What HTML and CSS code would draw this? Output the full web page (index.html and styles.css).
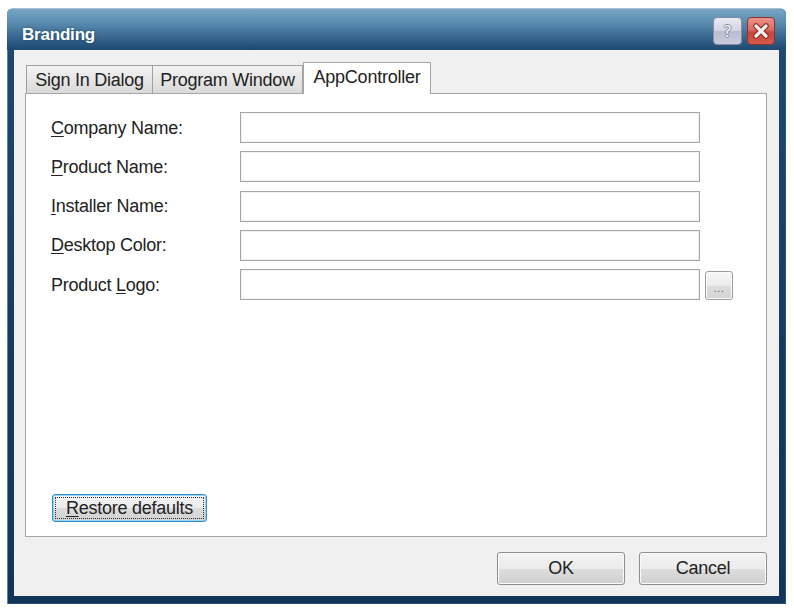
FILE: index.html
```html
<!DOCTYPE html>
<html>
<head>
<meta charset="utf-8">
<title>Branding</title>
<link rel="stylesheet" href="styles.css">
</head>
<body>
<div class="window">
  <div class="titlebar">
    <div class="title">Branding</div>
    <div class="caption-buttons">
      <div class="cap-btn help"><span class="qmark">?</span></div>
      <div class="cap-btn close">
        <svg width="26" height="26" viewBox="0 0 26 26">
          <path d="M8 8 L18 18 M18 8 L8 18" stroke="#8a2f27" stroke-width="5.5" stroke-linecap="round" fill="none"/>
          <path d="M8 8 L18 18 M18 8 L8 18" stroke="#f4eeee" stroke-width="3.2" stroke-linecap="round" fill="none"/>
        </svg>
      </div>
    </div>
  </div>
  <div class="client">
    <div class="tabs">
      <div class="tab tab-sign">Sign In Dialog</div>
      <div class="tab tab-prog">Program Window</div>
      <div class="tab tab-app active">AppController</div>
    </div>
    <div class="panel">
      <div class="fields">
        <div class="row">
          <label class="lbl"><u>C</u>ompany Name:</label>
          <div class="input"></div>
        </div>
        <div class="row">
          <label class="lbl"><u>P</u>roduct Name:</label>
          <div class="input"></div>
        </div>
        <div class="row">
          <label class="lbl"><u>I</u>nstaller Name:</label>
          <div class="input"></div>
        </div>
        <div class="row">
          <label class="lbl"><u>D</u>esktop Color:</label>
          <div class="input"></div>
        </div>
        <div class="row">
          <label class="lbl">Product <u>L</u>ogo:</label>
          <div class="input"></div>
          <div class="browse"><span class="dots">...</span></div>
        </div>
      </div>
      <div class="restore"><span class="focus"><u>R</u>estore defaults</span></div>
    </div>
    <div class="actions">
      <div class="btn">OK</div>
      <div class="btn">Cancel</div>
    </div>
  </div>
</div>
</body>
</html>
```
FILE: styles.css
```css
* { box-sizing: border-box; }
html, body { margin: 0; padding: 0; background: #ffffff; }
body {
  font-family: "Liberation Sans", Arial, sans-serif;
  font-size: 18px;
  letter-spacing: -0.25px;
  color: #222222;
  width: 794px;
  height: 608px;
  overflow: hidden;
}
u { text-decoration: underline; text-underline-offset: 2px; text-decoration-thickness: 1px; }

.window {
  margin: 8px 0 0 7px;
  width: 779px;
  height: 596px;
  display: flex;
  flex-direction: column;
  background: linear-gradient(#1f4a70, #163a5e 60%, #13355a);
  border-radius: 6px 6px 0 0;
  border-top: 1px solid #a7c0d3;
  box-shadow: inset 1px 0 0 #5c84a6, inset -1px 0 0 #2b5278, inset 0 -1px 0 #2a4f74;
  overflow: hidden;
}

.titlebar {
  flex: 0 0 41px;
  display: flex;
  justify-content: space-between;
  align-items: flex-start;
  padding: 0 11px 0 15px;
  background: linear-gradient(#77a6c3 0%, #5d8fb2 30%, #3b6a92 65%, #1d4870 100%);
}
.title {
  margin-top: 16px;
  font-size: 17px;
  line-height: 20px;
  font-weight: bold;
  letter-spacing: -0.2px;
  color: #ffffff;
  text-shadow: 0 0 3px rgba(20, 50, 80, 0.6);
}
.caption-buttons {
  display: flex;
  gap: 5px;
  margin-top: 8px;
}
.cap-btn {
  height: 28px;
  border-radius: 4px;
  display: flex;
  align-items: center;
  justify-content: center;
}
.help {
  width: 29px;
  border: 1px solid #8a8ca4;
  background: linear-gradient(#ebebf2, #d2d3e2 50%, #babcd1 51%, #c9cbdd);
}
.qmark {
  font-family: "DejaVu Sans", sans-serif;
  font-size: 16px;
  color: #f6f6fa;
  letter-spacing: 0;
  text-shadow: 1px 0 0 #8a8b99, -1px 0 0 #8a8b99, 0 1px 0 #8a8b99, 0 -1px 0 #8a8b99;
}
.close {
  width: 28px;
  border: 1px solid #8b3129;
  background: linear-gradient(#eb938a, #dc6a5f 45%, #c8463b 55%, #d2594c);
}

.client {
  flex: 1;
  margin: 0 7px 8px 7px;
  background: #f0f0f0;
  display: flex;
  flex-direction: column;
  padding: 12px 12px 11px 11px;
}

.tabs {
  display: flex;
  height: 32px;
  margin-bottom: -1px;
  padding-left: 1px;
  position: relative;
  z-index: 1;
}
.tab {
  display: flex;
  align-items: center;
  justify-content: center;
  white-space: nowrap;
  height: 28px;
  margin-top: 3px;
  padding-top: 1px;
  border: 1px solid #a0a0a0;
  border-bottom: none;
  background: linear-gradient(#f3f3f3, #e6e6e6 50%, #d9d9d9);
}
.tab-sign { width: 127px; }
.tab-prog { width: 150px; border-left: none; }
.tab-app { width: 128px; }
.tab.active {
  height: 32px;
  margin-top: 0;
  padding-top: 0;
  padding-bottom: 2px;
  background: #ffffff;
  border-color: #a6a6a6;
}

.panel {
  flex: 0 0 444px;
  border: 1px solid #a6a6a6;
  background: #ffffff;
  display: flex;
  flex-direction: column;
  padding: 18px 0 14px 25px;
}
.fields {
  display: flex;
  flex-direction: column;
  gap: 8.25px;
}
.row {
  display: flex;
  align-items: center;
  height: 31px;
}
.lbl {
  width: 189px;
  padding-top: 1px;
  white-space: nowrap;
}
.input {
  width: 460px;
  height: 31px;
  border: 1px solid #a3a6ab;
  box-shadow: inset 0 0 0 1px #f1f2f3;
  background: #ffffff;
}
.browse {
  margin-left: 5px;
  margin-top: 2px;
  width: 28px;
  height: 29px;
  border: 1px solid #9c9c9c;
  border-radius: 3px;
  background: linear-gradient(#f6f6f6, #ececec 50%, #dddddd 51%, #d4d4d4);
  box-shadow: inset 0 0 0 1px #fbfbfb;
  display: flex;
  align-items: flex-end;
  justify-content: center;
  padding-bottom: 5px;
}
.dots {
  font-size: 11px;
  line-height: 11px;
  letter-spacing: 0.5px;
  color: #555555;
}

.restore {
  margin-top: auto;
  margin-left: 1px;
  width: 155px;
  height: 28px;
  border: 1px solid #3a8dc8;
  border-radius: 3px;
  box-shadow: inset 0 0 0 1px #94d2f4;
  background: linear-gradient(#f4f4f4, #ebebeb 50%, #dcdcdc 51%, #d2d2d2);
  padding: 2px;
  display: flex;
}
.focus {
  flex: 1;
  border: 1px dotted #303030;
  display: flex;
  align-items: center;
  justify-content: center;
  white-space: nowrap;
}

.actions {
  margin-top: 15px;
  height: 33px;
  display: flex;
  justify-content: flex-end;
  gap: 14px;
}
.btn {
  width: 128px;
  height: 33px;
  border: 1px solid #8e8e8e;
  border-radius: 3px;
  background: linear-gradient(#f3f3f3, #ebebeb 50%, #dddddd 51%, #cfcfcf);
  box-shadow: inset 0 0 0 1px #fafafa;
  display: flex;
  align-items: center;
  justify-content: center;
}
```
